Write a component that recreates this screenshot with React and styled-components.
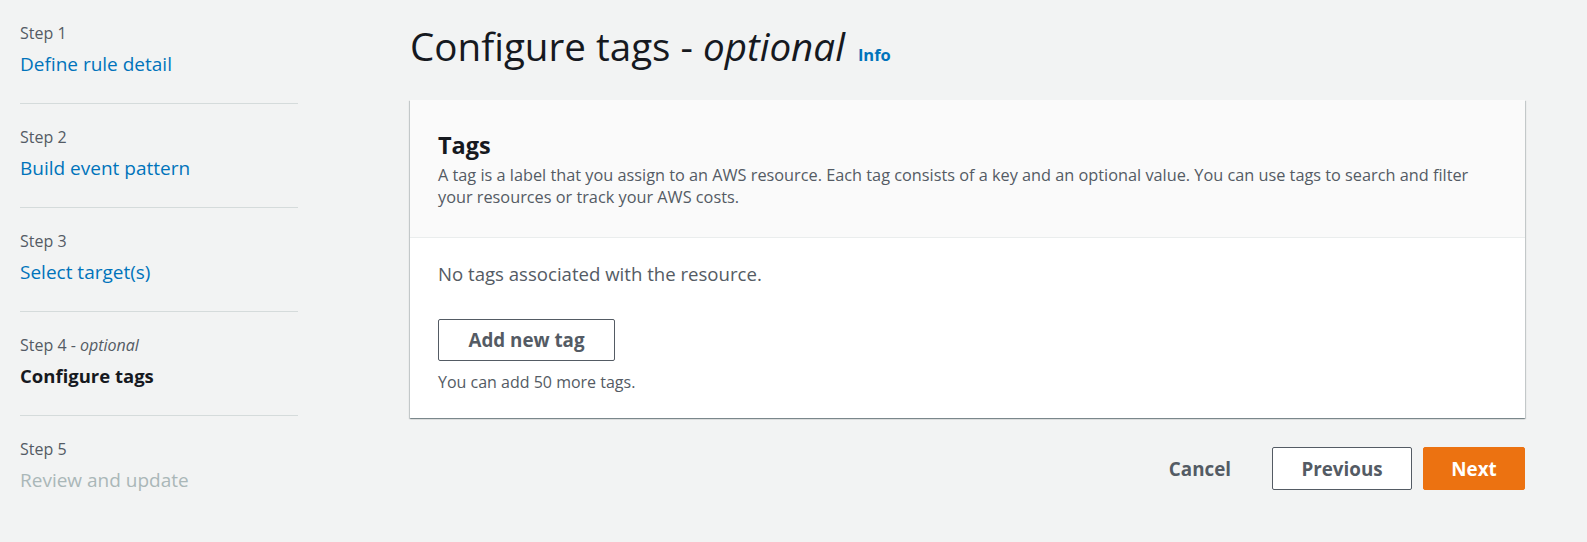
import styled, { createGlobalStyle } from "styled-components";

const GlobalStyle = createGlobalStyle`
  body {
    margin: 0;
    background: #f2f3f3;
    font-family: "Open Sans", "Noto Sans", sans-serif;
    color: #16191f;
  }
`;

const steps = [
  { label: "Step 1", title: "Define rule detail", state: "link" },
  { label: "Step 2", title: "Build event pattern", state: "link" },
  { label: "Step 3", title: "Select target(s)", state: "link" },
  { label: "Step 4", optional: true, title: "Configure tags", state: "current" },
  { label: "Step 5", title: "Review and update", state: "disabled" },
];

function App() {
  return (
    <>
      <GlobalStyle />
      <Page>
        <Sidebar>
          {steps.map((step, i) => (
            <StepItem key={step.label} last={i === steps.length - 1}>
              <StepLabel>
                {step.label}
                {step.optional && (
                  <>
                    {" - "}
                    <em>optional</em>
                  </>
                )}
              </StepLabel>
              <StepTitle state={step.state}>{step.title}</StepTitle>
            </StepItem>
          ))}
        </Sidebar>

        <Main>
          <Heading>
            Configure tags - <em>optional</em>
            <InfoLink>Info</InfoLink>
          </Heading>

          <Card>
            <CardHeader>
              <CardTitle>Tags</CardTitle>
              <CardDescription>
                A tag is a label that you assign to an AWS resource. Each tag consists of a key and an
                optional value. You can use tags to search and filter your resources or track your AWS
                costs.
              </CardDescription>
            </CardHeader>
            <CardBody>
              <EmptyText>No tags associated with the resource.</EmptyText>
              <OutlineButton wide>Add new tag</OutlineButton>
              <Hint>You can add 50 more tags.</Hint>
            </CardBody>
          </Card>

          <Actions>
            <LinkButton>Cancel</LinkButton>
            <OutlineButton>Previous</OutlineButton>
            <PrimaryButton>Next</PrimaryButton>
          </Actions>
        </Main>
      </Page>
    </>
  );
}

export default App;

const Page = styled.div`
  display: flex;
  padding-left: 20px;
  padding-right: 62px;
  gap: 112px;
  min-height: 542px;
  box-sizing: border-box;
`;

const Sidebar = styled.nav`
  width: 278px;
  flex-shrink: 0;
  display: flex;
  flex-direction: column;
`;

const StepItem = styled.div`
  display: flex;
  flex-direction: column;
  gap: 7px;
  padding: 22px 0 ${(p) => (p.last ? "0" : "26px")};
  border-bottom: ${(p) => (p.last ? "none" : "1px solid #d5dbdb")};
`;

const StepLabel = styled.div`
  font-size: 16px;
  line-height: 22px;
  color: #545b64;

  em {
    font-style: italic;
  }
`;

const StepTitle = styled.div`
  font-size: ${(p) => (p.state === "current" ? "18.5px" : "19px")};
  line-height: 26px;
  color: ${(p) =>
    p.state === "current" ? "#16191f" : p.state === "disabled" ? "#aab7b8" : "#0073bb"};
  font-weight: ${(p) => (p.state === "current" ? 700 : 400)};
`;

const Main = styled.main`
  flex: 1;
  display: flex;
  flex-direction: column;
  padding-top: 23px;
`;

const Heading = styled.h1`
  margin: 0 0 31px;
  font-size: 38.6px;
  line-height: 46px;
  height: 46px;
  font-weight: 400;
  color: #16191f;
  white-space: nowrap;

  em {
    font-style: italic;
  }
`;

const InfoLink = styled.a`
  margin-left: 13px;
  font-size: 16.5px;
  font-weight: 700;
  color: #0073bb;
`;

const Card = styled.section`
  background: #fff;
  box-shadow: 0 1px 1px 0 rgba(0, 28, 36, 0.3), 1px 1px 1px 0 rgba(0, 28, 36, 0.15),
    -1px 1px 1px 0 rgba(0, 28, 36, 0.15);
  display: flex;
  flex-direction: column;
`;

const CardHeader = styled.header`
  background: #fafafa;
  border-bottom: 1px solid #eaeded;
  padding: 30px 28px 29px;
  display: flex;
  flex-direction: column;
  gap: 4px;
`;

const CardTitle = styled.h2`
  margin: 0;
  font-size: 23.5px;
  line-height: 30px;
  font-weight: 700;
`;

const CardDescription = styled.p`
  margin: 0;
  font-size: 16.3px;
  line-height: 22px;
  color: #545b64;
  max-width: 1045px;
`;

const CardBody = styled.div`
  padding: 23px 28px 26px;
  display: flex;
  flex-direction: column;
  align-items: flex-start;
`;

const EmptyText = styled.p`
  margin: 0 0 32px;
  font-size: 18.6px;
  line-height: 26px;
  color: #545b64;
`;

const Hint = styled.p`
  margin: 11px 0 0;
  font-size: 16px;
  line-height: 20px;
  color: #545b64;
`;

const BaseButton = styled.button`
  font-family: inherit;
  font-size: 18.8px;
  font-weight: 700;
  height: 43px;
  padding: 0;
  border-radius: 2px;
  cursor: pointer;
  box-sizing: border-box;
`;

const OutlineButton = styled(BaseButton)`
  background: #fff;
  color: #545b64;
  border: 1px solid #545b64;
  width: ${(p) => (p.wide ? "177px" : "140px")};
  height: ${(p) => (p.wide ? "42px" : "43px")};
`;

const PrimaryButton = styled(BaseButton)`
  background: #ec7211;
  color: #fff;
  border: 1px solid #ec7211;
  width: 102px;
`;

const LinkButton = styled(BaseButton)`
  background: transparent;
  border: none;
  color: #545b64;
  padding: 0 20px;
  margin-right: 10px;
`;

const Actions = styled.div`
  margin-top: 29px;
  display: flex;
  justify-content: flex-end;
  align-items: center;
  gap: 11px;
`;
